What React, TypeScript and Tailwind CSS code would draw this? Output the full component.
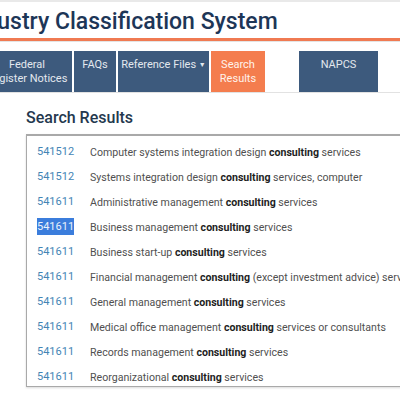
import React from "react";

type Row = { code: string; before: string; after: string; selected?: boolean };

const rows: Row[] = [
  { code: "541512", before: "Computer systems integration design ", after: " services" },
  { code: "541512", before: "Systems integration design ", after: " services, computer" },
  { code: "541611", before: "Administrative management ", after: " services" },
  { code: "541611", before: "Business management ", after: " services", selected: true },
  { code: "541611", before: "Business start-up ", after: " services" },
  { code: "541611", before: "Financial management ", after: " (except investment advice) services" },
  { code: "541611", before: "General management ", after: " services" },
  { code: "541611", before: "Medical office management ", after: " services or consultants" },
  { code: "541611", before: "Records management ", after: " services" },
  { code: "541611", before: "Reorganizational ", after: " services" },
];

function NavButton({
  children,
  className,
}: {
  children: React.ReactNode;
  className: string;
}) {
  return (
    <div
      className={`h-[41px] shrink-0 pt-[7px] text-center text-[11px] leading-[14px] ${className}`}
    >
      {children}
    </div>
  );
}

export default function App() {
  return (
    <div
      className="relative h-[400px] w-[400px] overflow-hidden bg-white"
      style={{ fontFamily: "Roboto, 'Noto Sans', sans-serif" }}
    >
      {/* page header */}
      <div className="border-t-2 border-[#e9e9e9]">
        <div className="h-[36px] whitespace-nowrap pt-[5px]">
          <h1 className="-ml-[35px] text-[23px] font-medium leading-[30px] text-[#1d3657]">
            Industry Classification System
          </h1>
        </div>
        <div className="h-[3px] bg-[#f07a52]" />
        <div className="h-px bg-[#e4e4e4]" />
      </div>

      {/* main navigation */}
      <div className="mt-[9px] border-b border-[#e2e2e2]">
        <div className="-ml-[18px] flex gap-[2px] whitespace-nowrap text-[#e3e8ee]">
          <NavButton className="w-[90px] bg-[#3d5a7d]">
            Federal
            <br />
            Register Notices
          </NavButton>
          <NavButton className="w-[42px] bg-[#3d5a7d]">FAQs</NavButton>
          <NavButton className="w-[91px] bg-[#3d5a7d]">
            Reference Files <span className="text-[7px] align-[1px]">▼</span>
          </NavButton>
          <NavButton className="w-[54px] bg-[#f47d4e] text-[#fff3ec]">
            Search
            <br />
            Results
          </NavButton>
          <NavButton className="ml-[32px] w-[79px] bg-[#3d5a7d]">NAPCS</NavButton>
        </div>
      </div>

      {/* results */}
      <div className="pl-[26px]">
        <h2 className="mt-[13px] text-[16px] font-medium leading-[24px] text-[#24384e]">
          Search Results
        </h2>
        <div className="mt-[4px] h-[253px] w-[420px] overflow-hidden border border-t-2 border-[#a9a9a9] pt-[4px] shadow-[0_1px_2px_rgba(0,0,0,0.15)]">
          {rows.map((r, i) => (
            <div
              key={i}
              className="flex h-[25px] items-center whitespace-nowrap"
            >
              <span className="w-[63px] shrink-0 pl-[10px] text-[11px]">
                <span
                  className={
                    r.selected
                      ? "bg-[#3b7ddc] py-[2px] text-[#e9f1fb]"
                      : "text-[#4485b5]"
                  }
                >
                  {r.code}
                </span>
              </span>
              <span className="text-[10.6px] text-[#505050]">
                {r.before}
                <b className="font-bold text-[#1e1e1e]">consulting</b>
                {r.after}
              </span>
            </div>
          ))}
        </div>
      </div>
    </div>
  );
}
